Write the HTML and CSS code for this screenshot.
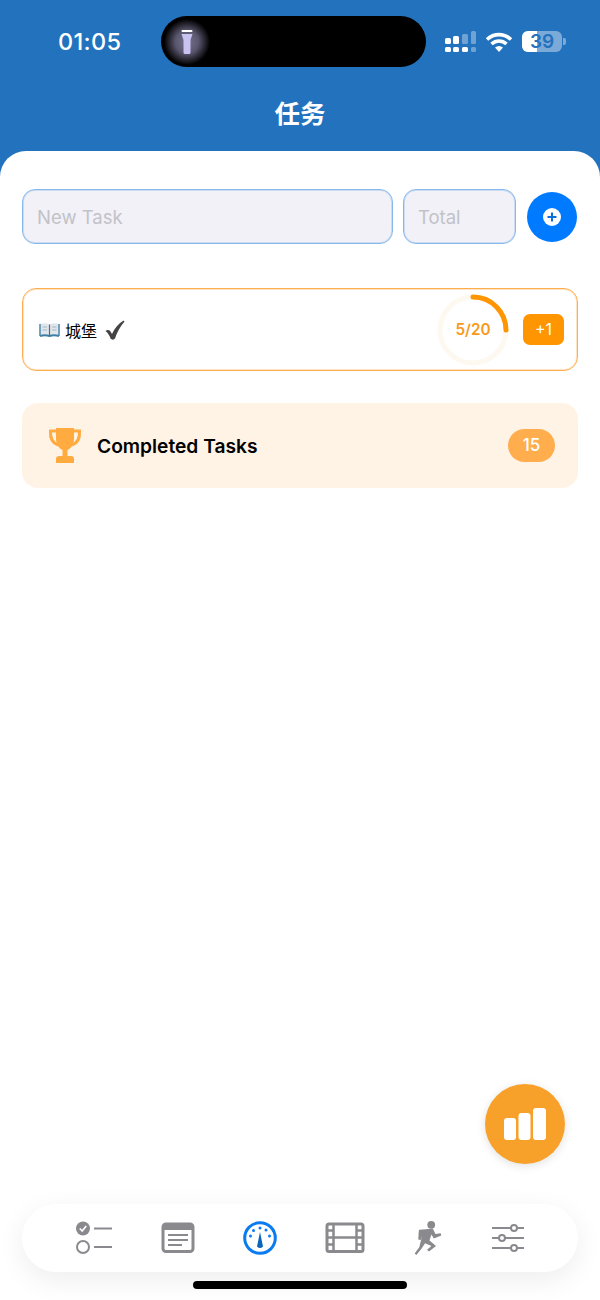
FILE: index.html
```html
<!DOCTYPE html>
<html lang="zh">
<head>
    <meta charset="UTF-8">
    <meta name="viewport" content="width=device-width, initial-scale=1.0">
    <title>任务</title>
    <link rel="stylesheet" href="styles.css">
</head>
<body>
<div class="app">

  <header class="top">
    <div class="status">
      <span class="time">01:05</span>
      <div class="island">
        <div class="torch">
          <svg width="14" height="26" viewBox="0 0 14 26"><rect x="1.500" y="1" width="11" height="2" rx="1" fill="#fff"/><path d="M1.500 5H12.500L10.500 11V23.500Q10.500 25 9 25H5Q3.500 25 3.500 23.500V11Z" fill="#c9c3f2"/></svg>
        </div>
      </div>
      <div class="status-icons">
        <svg width="32" height="22" viewBox="0 0 32 22"><g fill="#fff"><rect x="0" y="7" width="6" height="6" rx="1.500"/><rect x="8" y="5" width="6" height="8" rx="1.500"/><rect x="0" y="16" width="6" height="5" rx="1.500"/><rect x="8" y="16" width="6" height="5" rx="1.500"/><rect x="17" y="16" width="6" height="5" rx="1.500"/></g><g fill="#fff" opacity=".35"><rect x="17" y="3" width="6" height="10" rx="1.500"/><rect x="26" y="0" width="5" height="13" rx="1.500"/><rect x="26" y="16" width="5" height="5" rx="1.500"/></g></svg>
        <svg class="wifi" width="28" height="20" viewBox="0 0 28 20"><g fill="none" stroke="#fff" stroke-width="3.600"><path d="M2 7.500C9 1 19 1 26 7.500"/><path d="M6.500 12C11 8 17 8 21.500 12"/></g><path d="M10 15.500C12.500 13.500 15.500 13.500 18 15.500L14 20Z" fill="#fff"/></svg>
        <div class="battery"><div class="battery-fill"></div><span>39</span></div>
        <div class="battery-tip"></div>
      </div>
    </div>
    <h1 class="title">任务</h1>
  </header>

  <main class="sheet">
    <form class="add-form">
      <div class="field field-name">New Task</div>
      <div class="field field-total">Total</div>
      <div class="add-btn">
        <svg width="20" height="20" viewBox="0 0 20 20"><circle cx="10" cy="10" r="9" fill="#fff"/><path d="M10 5.500V14.500M5.500 10H14.500" stroke="#0a6fd8" stroke-width="2"/></svg>
      </div>
    </form>

    <div class="task">
      <div class="task-name">
        <svg class="book" width="21" height="16" viewBox="0 0 21 16"><path d="M1 2Q6 0.500 10.500 2.500Q15 0.500 20 2V13H1Z" fill="#dfe6ec"/><path d="M1 14Q6 12.500 10.500 14Q15 12.500 20 14" fill="none" stroke="#3f7fa6" stroke-width="2"/><path d="M1 2V14M20 2V14" stroke="#4d87ab" stroke-width="1.500"/><path d="M10.500 2.500V14" stroke="#5b6b78" stroke-width="1.200"/><path d="M3.500 5H8M3.500 8H8M13 5H17.500M13 8H17.500" stroke="#aab6c0"/></svg>
        <span>城堡</span>
        <svg class="tick" width="20" height="20" viewBox="0 0 20 20"><path d="M0.500 11C2 9.500 4 9.500 5.200 11L7 14C9.500 8.500 13 4 18.500 0.500L19.500 1.500C15 6.500 12 12.500 10 18.500C9 20 6.500 20 5.500 18.500C4.500 15.500 3 13 0.500 11Z" fill="#444"/></svg>
      </div>
      <div class="ring">
        <svg width="72" height="72" viewBox="0 0 72 72"><circle cx="36" cy="36" r="33" fill="none" stroke="#fdf8f0" stroke-width="5"/><path d="M36 3A33 33 0 0 1 69 36" fill="none" stroke="#ff9500" stroke-width="5" stroke-linecap="round"/></svg>
        <span>5/20</span>
      </div>
      <div class="plus-one">+1</div>
    </div>

    <div class="completed">
      <svg class="trophy" width="34" height="38" viewBox="0 0 34 38"><path d="M8 1H26V12C26 18 22 22 19.500 23V29H14.500V23C12 22 8 18 8 12Z" fill="#ffab40"/><path d="M8 4H2.500C2 11 4.500 16 10 18M26 4H31.500C32 11 29.500 16 24 18" fill="none" stroke="#ffab40" stroke-width="3"/><path d="M11 29H23Q26 29 26 32V36H8V32Q8 29 11 29Z" fill="#ffab40"/></svg>
      <span class="completed-label">Completed Tasks</span>
      <span class="count">15</span>
    </div>

    <div class="fab">
      <svg width="44" height="34" viewBox="0 0 44 34"><g fill="#fff"><rect x="1" y="11" width="12" height="22" rx="3"/><rect x="15.500" y="6" width="12" height="27" rx="3"/><rect x="30" y="1" width="13" height="32" rx="3"/></g></svg>
    </div>

    <nav class="tabs">
      <svg width="38" height="34" viewBox="0 0 38 34"><circle cx="8" cy="7.500" r="7" fill="#8a8a8e"/><path d="M4.800 7.500L7.200 10L11.200 5" fill="none" stroke="#fff" stroke-width="1.700"/><circle cx="8" cy="26" r="6" fill="none" stroke="#8a8a8e" stroke-width="2"/><path d="M19 7.500H37M19 26H37" stroke="#8a8a8e" stroke-width="2.200"/></svg>
      <svg width="34" height="32" viewBox="0 0 34 32"><rect x="2" y="2" width="30" height="27.500" rx="3" fill="none" stroke="#8a8a8e" stroke-width="3"/><path d="M1.500 4.500Q1.500 1.500 4.500 1.500H29.500Q32.500 1.500 32.500 4.500V8H1.500Z" fill="#8a8a8e"/><path d="M7 13H27M7 18H27M7 23H21" stroke="#8a8a8e" stroke-width="1.800"/></svg>
      <svg width="34" height="34" viewBox="0 0 34 34"><circle cx="17" cy="17" r="15.300" fill="none" stroke="#0a7cf0" stroke-width="3"/><g fill="#0a7cf0"><circle cx="7.500" cy="15" r="1.500"/><circle cx="10.500" cy="9.500" r="1.500"/><circle cx="17" cy="7" r="1.500"/><circle cx="23" cy="9" r="1.500"/><circle cx="26.500" cy="15" r="1.500"/></g><path d="M17 11L20 25.500Q17 28.500 14 25.500Z" fill="#0a66b8"/></svg>
      <svg width="40" height="32" viewBox="0 0 40 32"><rect x="2" y="2" width="36" height="27.500" rx="2" fill="none" stroke="#8a8a8e" stroke-width="3"/><path d="M8.500 1V30M31.500 1V30M8.500 15.500H31.500M1 8.500H8.500M1 15.500H8.500M1 22.500H8.500M31.500 8.500H39M31.500 15.500H39M31.500 22.500H39" stroke="#8a8a8e" stroke-width="2.500"/></svg>
      <svg width="30" height="36" viewBox="0 0 30 37"><circle cx="18.300" cy="5" r="4" fill="#8a8a8e"/><path d="M6 10L20 9L22.700 14.500L28 13.500L28.700 16L21 19L18.500 15L16.500 21L23.300 26.700L16 32.500L14 30.500L18.500 26.700L12 24L8.300 29.500L3 36L1.300 34.500L6 28L9 16L7.500 20.500L5 20L5.500 11.500Z" fill="#8a8a8e"/></svg>
      <svg width="34" height="30" viewBox="0 0 34 30"><g fill="none" stroke="#8a8a8e" stroke-width="2"><path d="M1 5H20M26 5H33M1 15H8M14 15H33M1 25H20M26 25H33"/><circle cx="23" cy="5" r="3"/><circle cx="11" cy="15" r="3"/><circle cx="23" cy="25" r="3"/></g></svg>
    </nav>
    <div class="home-bar"></div>
  </main>

</div>
</body>
</html>
```

FILE: styles.css
```css
* {
    margin: 0;
    padding: 0;
    box-sizing: border-box;
    font-family: Inter, 'Noto Sans CJK SC', sans-serif;
}
body {
    width: 600px;
    height: 1300px;
    background: #2372bd;
    overflow: hidden;
}
.app {
    display: flex;
    flex-direction: column;
    height: 1300px;
}
.top {
    height: 151px;
    padding-top: 16px;
    color: #fff;
}
.status {
    display: flex;
    align-items: center;
    height: 51px;
}
.time {
    width: 161px;
    padding-left: 58px;
    font-size: 23.5px;
    font-weight: 500;
    letter-spacing: 0.3px;
}
.island {
    width: 265px;
    height: 51px;
    background: #000;
    border-radius: 26px;
    display: flex;
    align-items: center;
}
.torch {
    width: 46px;
    height: 46px;
    margin-left: 3px;
    border-radius: 50%;
    background: radial-gradient(closest-side, #77728c 0%, #5a566e 50%, #000 100%);
    display: flex;
    align-items: center;
    justify-content: center;
}
.status-icons {
    display: flex;
    align-items: center;
    margin-left: 19px;
}
.wifi {
    margin-left: 8px;
}
.battery {
    position: relative;
    width: 40px;
    height: 21px;
    margin-left: 9px;
    border-radius: 6px;
    background: #7ba9d8;
    overflow: hidden;
    text-align: center;
}
.battery-fill {
    position: absolute;
    left: 0;
    top: 0;
    width: 15px;
    height: 21px;
    background: #fff;
}
.battery span {
    position: relative;
    font-size: 19px;
    font-weight: 600;
    line-height: 21px;
    color: #2372bd;
    display: block;
}
.battery-tip {
    width: 3px;
    height: 7px;
    margin-left: 1px;
    border-radius: 0 2px 2px 0;
    background: #7ba9d8;
}
.title {
    margin-top: 31px;
    text-align: center;
    font-size: 25.5px;
    font-weight: 600;
    line-height: 32px;
}
.sheet {
    position: relative;
    flex: 1;
    display: flex;
    flex-direction: column;
    padding: 38px 22px 0;
    background: #fff;
    border-radius: 26px 26px 0 0;
}
.add-form {
    display: flex;
    align-items: center;
    gap: 10px;
}
.field {
    height: 55px;
    padding-left: 14px;
    background: #f1f1f7;
    border: 1px solid #86b8ec;
    box-shadow: inset 0 0 0 1px rgba(134, 184, 236, 0.35);
    border-radius: 13px;
    color: #c2c2c8;
    font-size: 18.5px;
    line-height: 55px;
}
.field-name {
    width: 371px;
}
.field-total {
    width: 113px;
}
.add-btn {
    width: 50px;
    height: 50px;
    margin-left: 1px;
    border-radius: 50%;
    background: #007aff;
    display: flex;
    align-items: center;
    justify-content: center;
}
.task {
    display: flex;
    align-items: center;
    height: 83px;
    margin-top: 44px;
    padding: 0 13px 0 16px;
    border: 1px solid #ffae4f;
    box-shadow: inset 0 0 0 1px rgba(255, 174, 79, 0.35);
    border-radius: 14px;
    background: #fff;
}
.task-name {
    flex: 1;
    display: flex;
    align-items: center;
    font-size: 16px;
    color: #000;
}
.book {
    margin-right: 5px;
}
.tick {
    margin-left: 8px;
}
.ring {
    position: relative;
    width: 72px;
    height: 72px;
    display: flex;
    align-items: center;
    justify-content: center;
}
.ring svg {
    position: absolute;
    left: 0;
    top: 0;
}
.ring span {
    position: relative;
    font-size: 15.3px;
    font-weight: 600;
    color: #f79a1c;
}
.plus-one {
    width: 41px;
    height: 31px;
    margin-left: 14px;
    border-radius: 7px;
    background: #ff9500;
    color: #fff;
    font-size: 16px;
    line-height: 31px;
    text-align: center;
}
.completed {
    display: flex;
    align-items: center;
    height: 85px;
    margin-top: 32px;
    padding: 0 23px 0 26px;
    border-radius: 16px;
    background: #fff3e6;
}
.trophy {
    margin-right: 15px;
}
.completed-label {
    flex: 1;
    padding-top: 1px;
    font-size: 19.2px;
    font-weight: 600;
    color: #000;
}
.count {
    width: 47px;
    height: 33px;
    border-radius: 17px;
    background: #ffad4d;
    color: #fff;
    font-size: 17px;
    font-weight: 500;
    line-height: 33px;
    text-align: center;
}
.fab {
    position: absolute;
    right: 35px;
    top: 933px;
    width: 80px;
    height: 80px;
    border-radius: 50%;
    background: #f8a12a;
    box-shadow: 0 2px 10px rgba(0, 0, 0, 0.12);
    display: flex;
    align-items: center;
    justify-content: center;
}
.tabs {
    display: flex;
    align-items: center;
    justify-content: space-between;
    height: 68px;
    margin-top: auto;
    padding: 0 53px;
    border-radius: 34px;
    background: #fff;
    box-shadow: 0 8px 28px rgba(0, 0, 0, 0.07);
}
.home-bar {
    width: 214px;
    height: 8px;
    margin: 9px auto 11px;
    border-radius: 4px;
    background: #000;
}
```
